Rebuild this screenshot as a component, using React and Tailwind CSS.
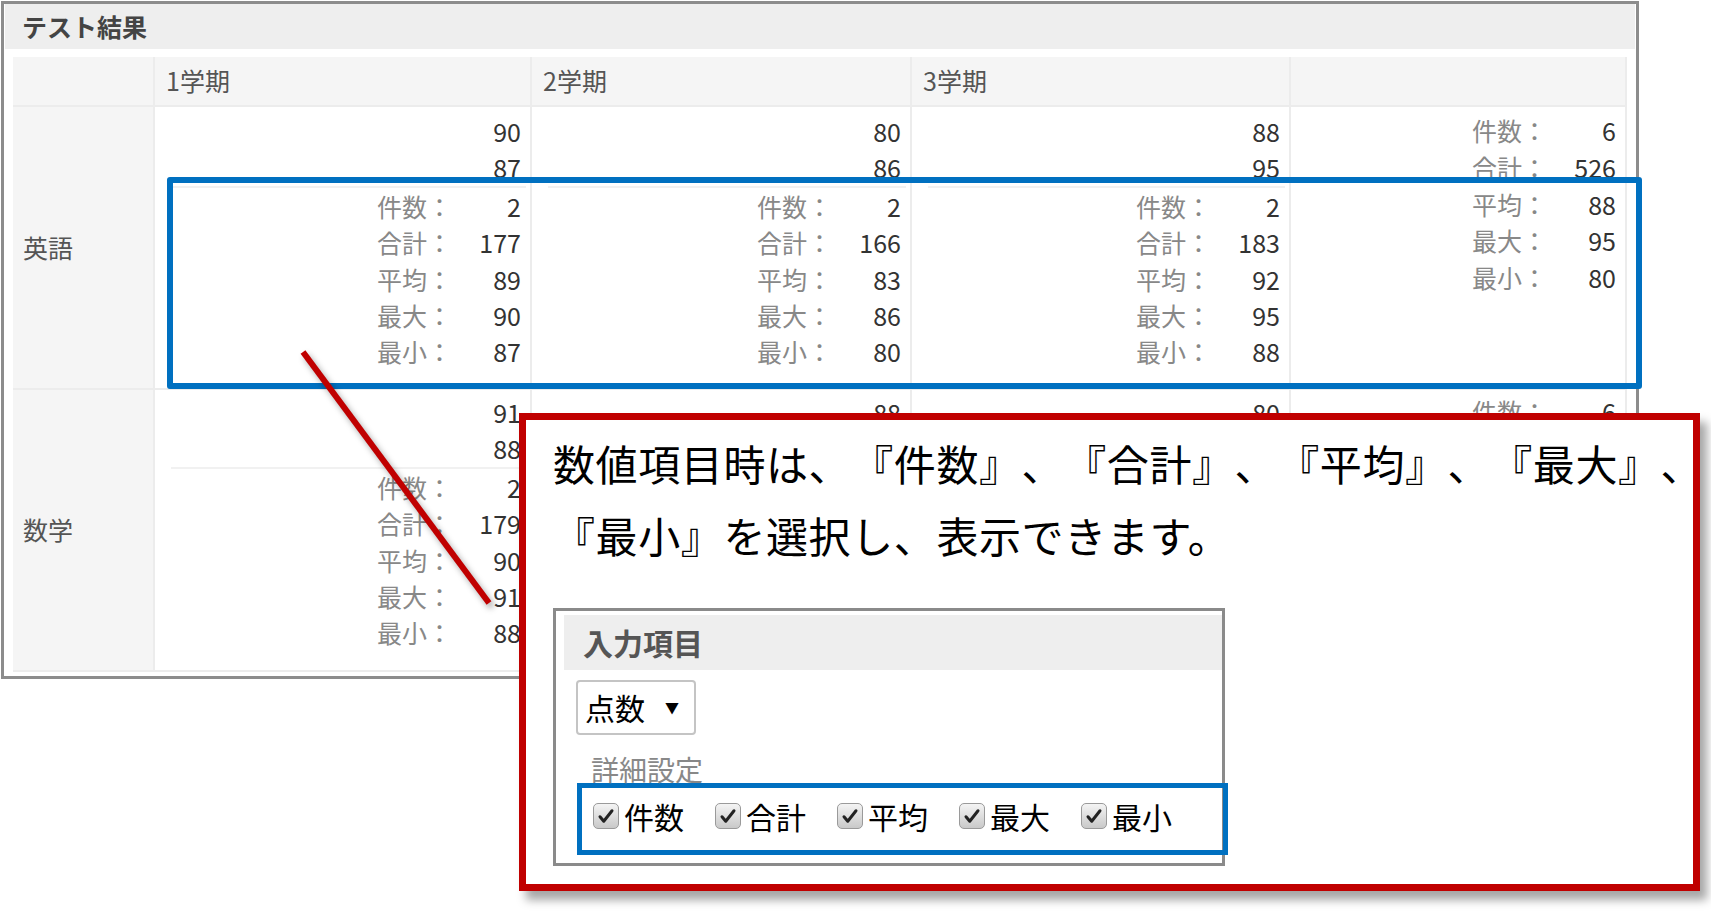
// Test result table with a callout explaining the summary options.
const rows = [
  {
    label: '英語',
    cells: [
      { values: [90, 87], stats: [2, 177, 89, 90, 87] },
      { values: [80, 86], stats: [2, 166, 83, 86, 80] },
      { values: [88, 95], stats: [2, 183, 92, 95, 88] },
    ],
    total: [6, 526, 88, 95, 80],
  },
  {
    label: '数学',
    cells: [
      { values: [91, 88], stats: [2, 179, 90, 91, 88] },
      { values: [88, 83], stats: [2, 171, 86, 88, 83] },
      { values: [80, 86], stats: [2, 166, 83, 86, 80] },
    ],
    total: [6, 516, 86, 91, 80],
  },
];

const statNames = ['件数', '合計', '平均', '最大', '最小'];

function StatList({ stats, lh }) {
  return (
    <div className="flex flex-col items-end pr-[5px]">
      {stats.map((v, i) => (
        <div key={i} className={`flex whitespace-nowrap ${lh}`}>
          <span className="w-[75px] shrink-0 text-[#888]">{statNames[i]}：</span>
          <span className="w-[69px] shrink-0 text-right text-[#333]">{v}</span>
        </div>
      ))}
    </div>
  );
}

function ScoreCell({ values, stats, top }) {
  return (
    <div className={`border-r-2 border-b-2 border-[#ececec] bg-white pl-4 pr-1 ${top}`}>
      <div className="pr-[5px] text-right text-[#333]">
        {values.map((v, i) => (
          <div key={i} className="leading-[36px]">{v}</div>
        ))}
      </div>
      <div className="mt-px h-[2px] bg-[#f1f1f1]" />
      <StatList stats={stats} lh="leading-[36.25px]" />
    </div>
  );
}

function Check({ label }) {
  return (
    <div className="flex items-center gap-[5px]">
      <span className="flex h-[26px] w-[26px] items-center justify-center rounded-[5px] border border-[#9a9a9a] bg-gradient-to-b from-[#f4f4f4] to-[#c9c9c9]">
        <svg width="18" height="18" viewBox="0 0 24 24" fill="none">
          <path d="M4 13l5 6L20 5" stroke="#222" strokeWidth="4" strokeLinecap="round" strokeLinejoin="round" />
        </svg>
      </span>
      <span className="text-[30px] leading-none text-black">{label}</span>
    </div>
  );
}

export default function App() {
  return (
    <div className="relative h-[914px] w-[1711px] overflow-hidden bg-white font-['Noto_Sans_CJK_JP',sans-serif] [text-spacing-trim:space-all]">
      <div className="ml-px mt-px h-[678px] w-[1638px] border-[3px] border-[#8c8c8c] bg-white">
        <div className="mx-px flex h-[45px] items-center bg-[#eeeeee] pl-[17px] text-[25px] font-bold text-[#444]">
          テスト結果
        </div>
        <div className="ml-[9px] mt-[8px] grid w-[1614px] grid-cols-[142px_377px_380px_379px_336px] grid-rows-[50px_283px_282px] overflow-hidden text-[25px]">
          <div className="border-r-2 border-b-2 border-[#ececec] bg-[#f5f5f5]" />
          {['1学期', '2学期', '3学期', ''].map((h, i) => (
            <div key={i} className="flex items-center border-r-2 border-b-2 border-[#ececec] bg-[#f5f5f5] pl-[11px] text-[#555]">
              {h}
            </div>
          ))}
          {rows.map((r, ri) => [
            <div key={`l${ri}`} className="flex items-center border-r-2 border-b-2 border-[#ececec] bg-[#f5f5f5] pl-[10px] text-[#555]">
              {r.label}
            </div>,
            ...r.cells.map((c, ci) => (
              <ScoreCell key={`c${ri}${ci}`} values={c.values} stats={c.stats} top={ri === 0 ? 'pt-[6px]' : 'pt-[4px]'} />
            )),
            <div key={`t${ri}`} className={`border-r-2 border-b-2 border-[#ececec] bg-white pr-1 ${ri === 0 ? 'pt-[5px]' : 'pt-[3px]'}`}>
              <StatList stats={r.total} lh="leading-[36.75px]" />
            </div>,
          ])}
        </div>
      </div>

      {/* highlight over the summary rows */}
      <div className="absolute left-[167px] top-[177px] h-[212px] w-[1475px] rounded-[3px] border-[6px] border-[#0070c0]" />

      <svg className="absolute left-0 top-0 drop-shadow-[3px_4px_3px_rgba(0,0,0,0.35)]" width="1711" height="914">
        <line x1="303" y1="352" x2="489" y2="603" stroke="#c00000" strokeWidth="6" />
      </svg>

      {/* callout */}
      <div className="absolute left-[519px] top-[413px] h-[478px] w-[1181px] border-[7px] border-[#c00000] bg-white pl-[27px] pt-[7px] shadow-[7px_9px_9px_rgba(0,0,0,0.35)]">
        <div className="whitespace-nowrap text-[42px] leading-[72px] tracking-[0.6px] text-black">
          数値項目時は、『件数』、『合計』、『平均』、『最大』、
          <br />
          『最小』を選択し、表示できます。
        </div>
        <div className="mt-[37px] h-[258px] w-[672px] border-[3px] border-[#8a8a8a] bg-white">
          <div className="ml-[8px] mt-[4px] flex h-[55px] items-center bg-[#eeeeee] pl-[19px] text-[30px] font-bold text-[#555]">
            入力項目
          </div>
          <div className="ml-[20px] mt-[10px] flex h-[55px] w-[120px] items-center rounded-[4px] border-2 border-[#c4c4c4] pl-[7px] text-[30px] text-black">
            <span>点数</span>
            <span className="ml-[20px] text-[14px]">▼</span>
          </div>
          <div className="ml-[35px] mt-[19px] text-[28px] leading-[30px] text-[#888]">詳細設定</div>
          <div className="-mt-px ml-[21px] flex h-[72px] w-[651px] items-center gap-[31px] border-[5px] border-[#0070c0] pb-[6px] pl-[11px]">
            {statNames.map((n) => (
              <Check key={n} label={n} />
            ))}
          </div>
        </div>
      </div>
    </div>
  );
}
